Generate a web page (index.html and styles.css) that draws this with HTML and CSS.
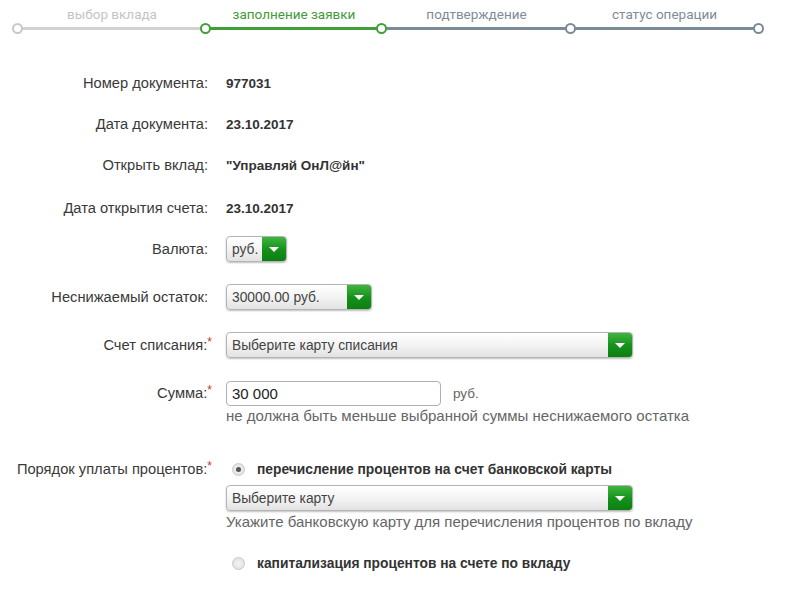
FILE: index.html
```html
<!doctype html>
<html lang="ru">
  <head>
    <meta charset="utf-8">
    <meta name="viewport" content="width=device-width, initial-scale=1" />
    <title>Открытие вклада — заполнение заявки</title>
    <link rel="stylesheet" href="styles.css">
  </head>
  <body>
    <div class="stepper">
      <div class="step step-done">
        <div class="step-title">выбор вклада</div>
        <div class="step-line"></div>
      </div>
      <div class="step step-active">
        <div class="step-title">заполнение заявки</div>
        <div class="step-line"></div>
      </div>
      <div class="step step-next">
        <div class="step-title">подтверждение</div>
        <div class="step-line"></div>
      </div>
      <div class="step step-next step-last">
        <div class="step-title">статус операции</div>
        <div class="step-line"></div>
      </div>
    </div>

    <div class="form">
      <div class="row">
        <div class="label">Номер документа:</div>
        <div class="body"><div class="line value">977031</div></div>
      </div>
      <div class="row">
        <div class="label">Дата документа:</div>
        <div class="body"><div class="line value">23.10.2017</div></div>
      </div>
      <div class="row">
        <div class="label">Открыть вклад:</div>
        <div class="body"><div class="line value">"Управляй ОнЛ@йн"</div></div>
      </div>
      <div class="row row-loose">
        <div class="label">Дата открытия счета:</div>
        <div class="body"><div class="line value">23.10.2017</div></div>
      </div>
      <div class="row">
        <div class="label">Валюта:</div>
        <div class="body">
          <div class="line">
            <div class="select select-currency">
              <span class="select-text">руб.</span>
              <span class="select-btn"></span>
            </div>
          </div>
        </div>
      </div>
      <div class="row row-wide">
        <div class="label">Неснижаемый остаток:</div>
        <div class="body">
          <div class="line">
            <div class="select select-min">
              <span class="select-text">30000.00 руб.</span>
              <span class="select-btn"></span>
            </div>
          </div>
        </div>
      </div>
      <div class="row row-wide">
        <div class="label">Счет списания:<span class="req">*</span></div>
        <div class="body">
          <div class="line">
            <div class="select select-long">
              <span class="select-text">Выберите карту списания</span>
              <span class="select-btn"></span>
            </div>
          </div>
        </div>
      </div>
      <div class="row row-wide">
        <div class="label">Сумма:<span class="req">*</span></div>
        <div class="body">
          <div class="line">
            <div class="input">30 000</div>
            <span class="unit">руб.</span>
          </div>
          <div class="hint">не должна быть меньше выбранной суммы неснижаемого остатка</div>
        </div>
      </div>
      <div class="row row-far">
        <div class="label">Порядок уплаты процентов:<span class="req">*</span></div>
        <div class="body">
          <div class="line">
            <span class="radio radio-checked"></span>
            <span class="option">перечисление процентов на счет банковской карты</span>
          </div>
          <div class="select select-long select-sub">
            <span class="select-text">Выберите карту</span>
            <span class="select-btn"></span>
          </div>
          <div class="hint hint-sub">Укажите банковскую карту для перечисления процентов по вкладу</div>
          <div class="line line-option">
            <span class="radio"></span>
            <span class="option">капитализация процентов на счете по вкладу</span>
          </div>
        </div>
      </div>
    </div>
  </body>
</html>
```

FILE: styles.css
```css
*, *::before, *::after {
    box-sizing: border-box;
}

body {
    margin: 0;
    font-family: "Liberation Sans", Arial, sans-serif;
    font-size: 13px;
    color: #333;
    background: #fff;
}

/* steps on top */
.stepper {
    display: flex;
    padding-left: 18px;
    padding-top: 6px;
}

.step {
    position: relative;
}

.step:nth-child(1) { width: 188px; }
.step:nth-child(2) { width: 176px; }
.step:nth-child(3) { width: 189px; }
.step:nth-child(4) { width: 187px; }

.step-title {
    font-family: Roboto, "Liberation Sans", sans-serif;
    font-size: 13.5px;
    line-height: 16px;
    text-align: center;
    height: 21px;
}

.step-line {
    height: 3px;
    background: #d2d2d2;
}

.step::before,
.step-last::after {
    content: "";
    position: absolute;
    top: 17px;
    left: -6px;
    width: 11px;
    height: 11px;
    border-radius: 50%;
    background: #fff;
    border: 2px solid #c8c8c8;
    z-index: 1;
}

.step-last::after {
    left: auto;
    right: -6px;
    border-color: #7b8a98;
}

.step-done .step-title { color: #c4c4c4; }

.step-active .step-title { color: #3f9a38; }
.step-active .step-line { background: #40a036; }
.step-active::before { border-color: #40a036; }

.step-next .step-title { color: #7f8b96; }
.step-next .step-line { background: #7b8a98; }
.step-next::before { border-color: #7b8a98; }
.step-active + .step-next::before { border-color: #40a036; }

/* form */
.form {
    padding-top: 40px;
}

.row {
    display: flex;
    align-items: flex-start;
}

.row + .row {
    margin-top: 15px;
}

.row.row-loose { margin-top: 17px; }
.row.row-wide { margin-top: 22px; }
.row.row-far { margin-top: 32px; }

.label {
    width: 208px;
    height: 26px;
    flex: none;
    text-align: right;
    font-size: 14.7px;
    line-height: 26px;
    color: #3a3a3a;
    white-space: nowrap;
}

.req {
    position: relative;
    top: -4px;
    color: #d0302c;
    font-size: 12px;
    margin-right: -4px;
}

.body {
    margin-left: 18px;
}

.line {
    display: flex;
    align-items: center;
    min-height: 26px;
}

.value {
    font-weight: bold;
    font-size: 13.5px;
}

.select {
    display: flex;
    align-items: center;
    height: 26px;
    border: 1px solid #b4b4b4;
    border-radius: 4px;
    background: linear-gradient(#ffffff, #f4f4f4 50%, #e2e2e2);
    box-shadow: 0 1px 2px rgba(0, 0, 0, .25);
    overflow: hidden;
}

.select-currency { width: 61px; }
.select-min { width: 146px; }
.select-long { width: 407px; }

.select-sub {
    margin-top: 3px;
}

.select-text {
    flex: 1;
    padding-left: 5px;
    font-size: 13.8px;
    color: #444;
    white-space: nowrap;
}

.select-btn {
    position: relative;
    width: 24px;
    height: 100%;
    background: linear-gradient(#3fb53f, #13901a 55%, #0c8012);
}

.select-btn::after {
    content: "";
    position: absolute;
    left: 7px;
    top: 10px;
    border-left: 5px solid transparent;
    border-right: 5px solid transparent;
    border-top: 5px solid #fff;
}

.input {
    width: 215px;
    height: 25px;
    border: 1px solid #b0b0b0;
    border-radius: 4px;
    padding-left: 5px;
    font-size: 15px;
    line-height: 23px;
    color: #222;
}

.unit {
    margin-left: 12px;
    font-size: 13.5px;
    color: #666;
}

.hint {
    color: #666;
    font-size: 15px;
    line-height: 17px;
    margin-top: 1px;
}

.hint-sub {
    margin-top: 2px;
}

.radio {
    width: 13px;
    height: 13px;
    margin-left: 6px;
    margin-right: 12px;
    border-radius: 50%;
    border: 1px solid #c9c9c9;
    background: radial-gradient(#f4f4f4, #dcdcdc);
    position: relative;
}

.radio-checked::after {
    content: "";
    position: absolute;
    left: 3px;
    top: 3px;
    width: 5px;
    height: 5px;
    border-radius: 50%;
    background: #555;
}

.option {
    font-weight: bold;
    font-size: 13.8px;
}

.line-option {
    margin-top: 20px;
}
```
